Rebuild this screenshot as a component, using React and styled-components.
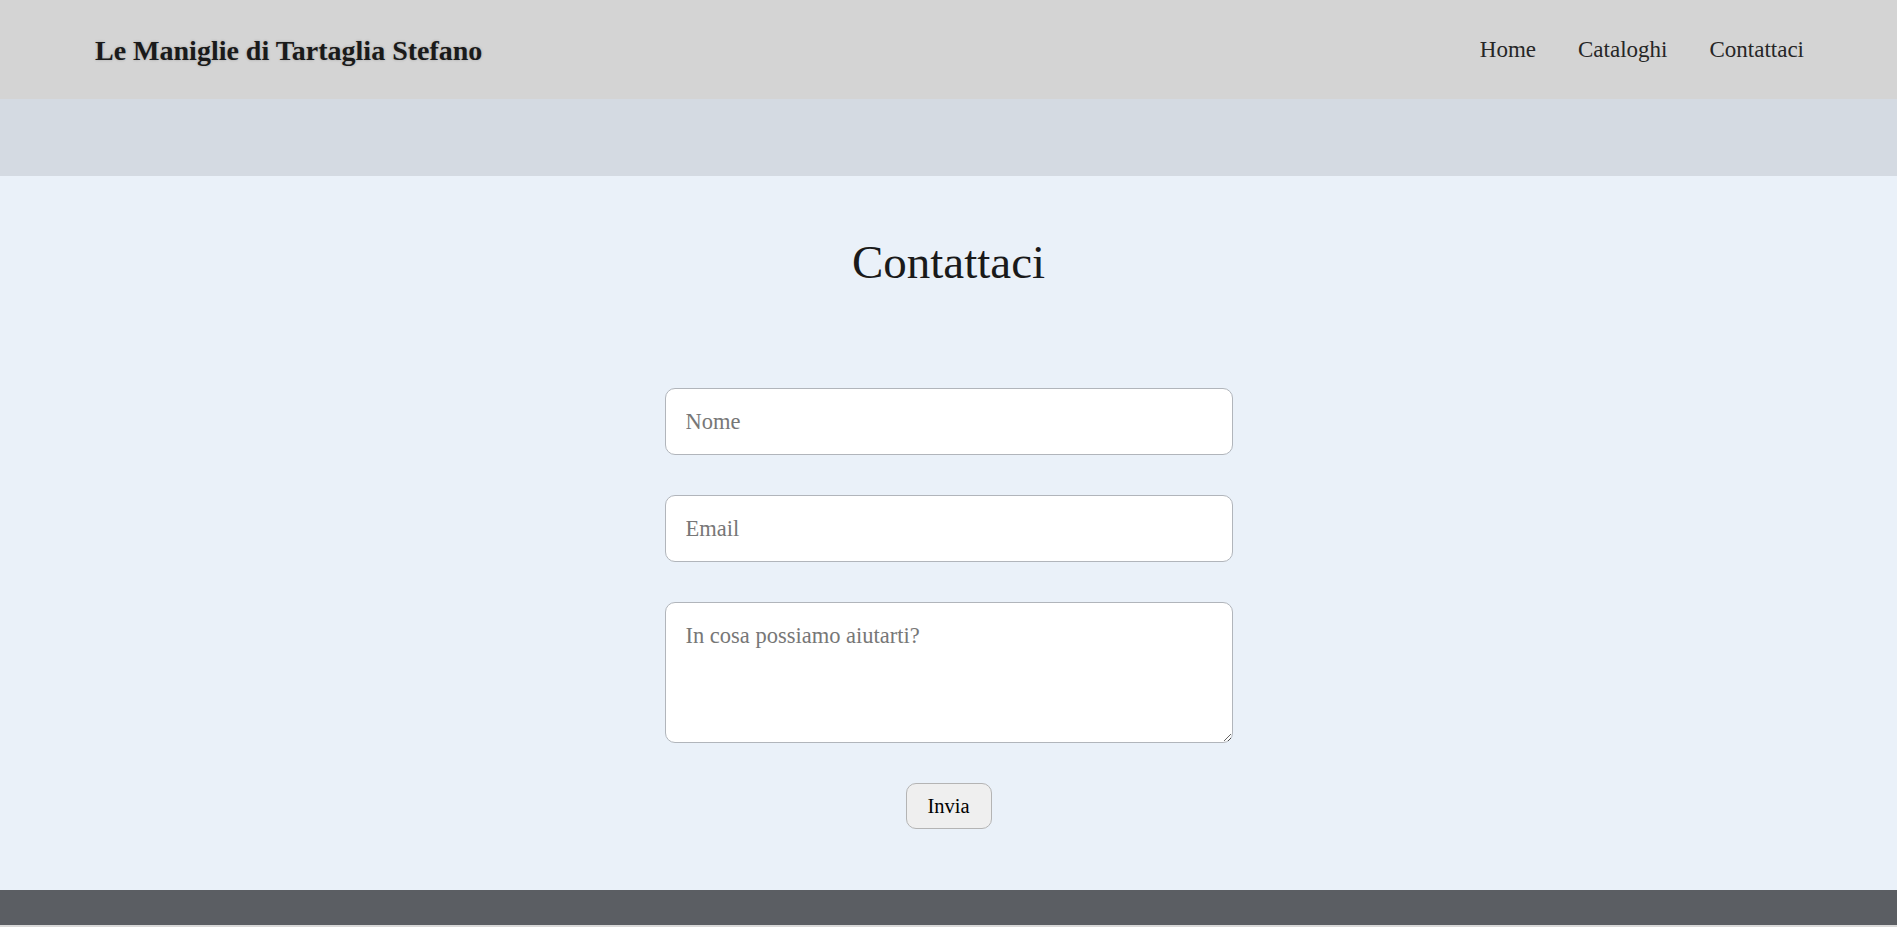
import styled, { createGlobalStyle } from "styled-components";

const GlobalStyle = createGlobalStyle`
  html, body {
    margin: 0;
    padding: 0;
  }
  body {
    font-family: "Liberation Serif", "DejaVu Serif", serif;
    background: #d9d9d9;
    color: #1c1c1c;
  }
`;

const Header = styled.header`
  height: 99px;
  box-sizing: border-box;
  padding: 0 93px 0 95px;
  background: #d4d4d4;
  display: flex;
  justify-content: space-between;
  align-items: center;
`;

const Logo = styled.a`
  font-size: 28px;
  font-weight: bold;
  color: #1a1a1a;
  text-decoration: none;
  text-shadow: 0 0 3px rgba(0, 0, 0, 0.22);
  margin-top: 2px;
`;

const Nav = styled.nav`
  display: flex;
  gap: 42px;
`;

const NavLink = styled.a`
  font-size: 23px;
  color: #262626;
  text-decoration: none;
`;

const Band = styled.div`
  height: 77px;
  background: #d4dae2;
`;

const Main = styled.main`
  background: #eaf1f9;
  padding: 59px 0 61px;
  display: flex;
  flex-direction: column;
  align-items: center;
`;

const Title = styled.h1`
  margin: 0 0 99px;
  font-size: 47px;
  font-weight: normal;
  line-height: 54px;
  color: #1a1a1a;
`;

const Form = styled.form`
  width: 568px;
  display: flex;
  flex-direction: column;
  align-items: center;
  gap: 40px;
`;

const Field = styled.input`
  width: 100%;
  height: 67px;
  box-sizing: border-box;
  padding: 0 20px;
  border: 1px solid #b1b5bb;
  border-radius: 10px;
  background: #fff;
  font-family: inherit;
  font-size: 22.5px;
  color: #222;
  outline: none;

  &::placeholder {
    color: #777;
  }
`;

const Message = styled.textarea`
  width: 100%;
  height: 141px;
  box-sizing: border-box;
  padding: 20px 20px;
  border: 1px solid #b1b5bb;
  border-radius: 10px;
  background: #fff;
  font-family: inherit;
  font-size: 22.5px;
  color: #222;
  outline: none;
  resize: vertical;

  &::placeholder {
    color: #777;
  }
`;

const Submit = styled.button`
  width: 86px;
  height: 46px;
  border: 1px solid #b4b4b4;
  border-radius: 10px;
  background: #efefef;
  font-family: inherit;
  font-size: 20.5px;
  color: #000;
  cursor: pointer;
`;

const Footer = styled.footer`
  height: 35px;
  background: #5b5e63;
`;

const Bottom = styled.div`
  height: 60px;
  background: #d9d9d9;
`;

export default function App() {
  return (
    <>
      <GlobalStyle />
      <Header>
        <Logo href="#">Le Maniglie di Tartaglia Stefano</Logo>
        <Nav>
          <NavLink href="#">Home</NavLink>
          <NavLink href="#">Cataloghi</NavLink>
          <NavLink href="#">Contattaci</NavLink>
        </Nav>
      </Header>
      <Band />
      <Main>
        <Title>Contattaci</Title>
        <Form onSubmit={(e) => e.preventDefault()}>
          <Field type="text" placeholder="Nome" />
          <Field type="email" placeholder="Email" />
          <Message placeholder="In cosa possiamo aiutarti?" />
          <Submit type="submit">Invia</Submit>
        </Form>
      </Main>
      <Footer />
      <Bottom />
    </>
  );
}
